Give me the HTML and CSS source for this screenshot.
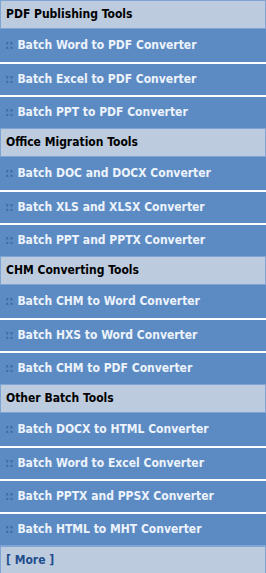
FILE: index.html
```html
<!DOCTYPE html>
<html lang="en">
<head>
    <meta charset="UTF-8">
    <meta name="viewport" content="width=device-width, initial-scale=1.0">
    <title>Batch Tools</title>
    <link rel="stylesheet" href="styles.css">
</head>
<body>
    <div class="menu">
        <div class="head">PDF Publishing Tools</div>
        <a class="item" href="#"><span class="dots">::</span> Batch Word to PDF Converter</a>
        <a class="item" href="#"><span class="dots">::</span> Batch Excel to PDF Converter</a>
        <a class="item" href="#"><span class="dots">::</span> Batch PPT to PDF Converter</a>

        <div class="head">Office Migration Tools</div>
        <a class="item" href="#"><span class="dots">::</span> Batch DOC and DOCX Converter</a>
        <a class="item" href="#"><span class="dots">::</span> Batch XLS and XLSX Converter</a>
        <a class="item" href="#"><span class="dots">::</span> Batch PPT and PPTX Converter</a>

        <div class="head">CHM Converting Tools</div>
        <a class="item" href="#"><span class="dots">::</span> Batch CHM to Word Converter</a>
        <a class="item" href="#"><span class="dots">::</span> Batch HXS to Word Converter</a>
        <a class="item" href="#"><span class="dots">::</span> Batch CHM to PDF Converter</a>

        <div class="head">Other Batch Tools</div>
        <a class="item" href="#"><span class="dots">::</span> Batch DOCX to HTML Converter</a>
        <a class="item" href="#"><span class="dots">::</span> Batch Word to Excel Converter</a>
        <a class="item" href="#"><span class="dots">::</span> Batch PPTX and PPSX Converter</a>
        <a class="item" href="#"><span class="dots">::</span> Batch HTML to MHT Converter</a>

        <a class="head more" href="#">[ More ]</a>
    </div>
</body>
</html>
```
FILE: styles.css
```css
body {
    margin: 0;
    background: #ffffff;
    font-family: "DejaVu Sans Condensed", "DejaVu Sans", Tahoma, sans-serif;
}
.menu {
    width: 266px;
    display: flex;
    flex-direction: column;
}
.head {
    display: block;
    height: 27px;
    line-height: 26px;
    padding: 0 5px;
    background: #bccbde;
    border: 1px solid #7fa3d2;
    color: #000000;
    font-size: 12px;
    font-weight: bold;
    text-decoration: none;
}
.item {
    display: block;
    height: 31px;
    line-height: 31px;
    padding: 0 5px;
    background: #5c8bc4;
    border-top: 2px solid #ffffff;
    color: #edf3fb;
    font-size: 12px;
    font-weight: bold;
    text-decoration: none;
}
.head + .item {
    border-top: 0;
    height: 33px;
    line-height: 33px;
}
.dots {
    color: #3c6ba8;
}
.more {
    color: #1f4e8e;
    border-top-width: 2px;
}
```
